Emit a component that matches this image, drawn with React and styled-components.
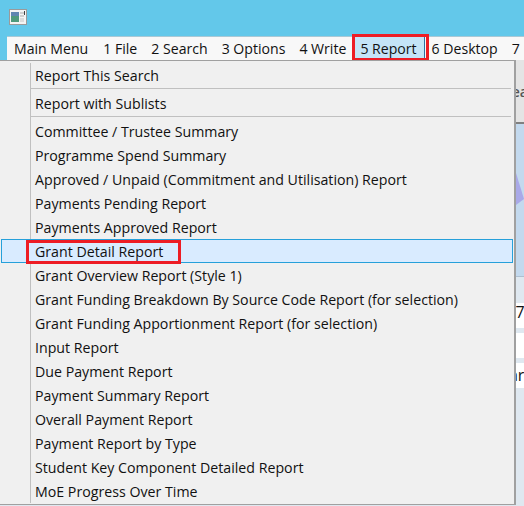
import React from "react";
import styled, { createGlobalStyle } from "styled-components";

const Global = createGlobalStyle`
  html, body { margin: 0; padding: 0; width: 524px; height: 506px; overflow: hidden; background: #63c8ea; }
  body { font-family: "Open Sans", "Noto Sans", "Liberation Sans", sans-serif; color: #111; }
`;
const Page = styled.div`
  position: relative;
  width: 524px;
  height: 506px;
  overflow: hidden;
  display: flex;
  flex-direction: column;
`;
const TitleBar = styled.header`
  height: 36px;
  flex: none;
  display: flex;
  align-items: flex-start;
  padding: 9px 0 0 9px;
  box-sizing: border-box;
  background: #63c8ea;
`;
const MenuBar = styled.nav`
  height: 24px;
  flex: none;
  margin-left: 7px;
  display: flex;
  align-items: center;
  background: #f8f8f8;
  border-top: 1px solid #a9c9d6;
  box-sizing: border-box;
  font-size: 14.1px;
  white-space: nowrap;
  overflow: visible;
`;
const BarItem = styled.span`
  position: relative;
  height: 24px;
  flex: none;
  display: flex;
  align-items: center;
  padding: 0 7px;
  margin-right: ${(p) => p.$gap || 0}px;
  background: ${(p) => (p.$open ? "#c4e4f7" : "transparent")};
  border-right: ${(p) => (p.$open ? "1px solid #2f6f9f" : "none")};
`;
const Workspace = styled.main`
  flex: 1;
  display: flex;
  flex-direction: column;
  background: #dfe8f0;
`;
const TabStrip = styled.div`
  height: 64px;
  flex: none;
  box-sizing: border-box;
  background: #e4e4e4;
  border-bottom: 2px solid #808080;
  padding: 22px 0 0 504px;
  font-size: 14px;
  font-weight: 600;
  color: #555;
  white-space: nowrap;
`;
const ChartArea = styled.div`
  height: 153px;
  flex: none;
  background: #c3d9ee;
  border-bottom: 1px solid #aebfd0;
  display: flex;
  justify-content: flex-end;
  align-items: flex-start;
  padding-top: 49px;
  box-sizing: border-box;
`;
const Table = styled.div`
  display: flex;
  flex-direction: column;
  gap: 5px;
  padding-top: 26px;
`;
const TableRow = styled.div`
  height: 25px;
  background: #fff;
  padding-left: ${(p) => p.$indent}px;
  font-size: 16px;
  line-height: ${(p) => p.$line || 25}px;
  white-space: nowrap;
`;
const Menu = styled.div`
  position: absolute;
  left: -1px;
  top: 60px;
  width: 517px;
  height: 445px;
  box-sizing: border-box;
  background: #f0f0f0;
  border: 1px solid #a0a0a0;
  border-right-width: 2px;
  padding: 2px 1px 1px 1px;
  display: flex;
  flex-direction: column;
  font-size: 14.2px;
  color: #111;
`;
const Gutter = styled.div`
  position: absolute;
  left: 30px;
  top: 2px;
  bottom: 1px;
  width: 1px;
  background: #c0c0c0;
`;
const Row = styled.div`
  position: relative;
  height: 24px;
  flex: none;
  box-sizing: border-box;
  display: flex;
  align-items: center;
  padding-left: 34px;
  white-space: nowrap;
  ${(p) => p.$active && `
    background: #d9ebff;
    border: 1px solid #26a0da;
    padding-left: 33px;
  `}
`;
const Separator = styled.div`
  height: 1px;
  flex: none;
  margin: 1px 2px 2px 30px;
  background: #c0c0c0;
`;
const Callout = styled.span`
  position: absolute;
  box-sizing: border-box;
  border: 3px solid #ed1c24;
  pointer-events: none;
`;
const BarCallout = styled(Callout)`
  left: -1px;
  top: -3px;
  width: 77px;
  height: 27px;
`;
const RowCallout = styled(Callout)`
  left: 24px;
  top: 0;
  width: 155px;
  height: 24px;
`;

const groupItems = [
  "Committee / Trustee Summary",
  "Programme Spend Summary",
  "Approved / Unpaid (Commitment and Utilisation) Report",
  "Payments Pending Report",
  "Payments Approved Report",
  "Grant Detail Report",
  "Grant Overview Report (Style 1)",
  "Grant Funding Breakdown By Source Code Report (for selection)",
  "Grant Funding Apportionment Report (for selection)",
  "Input Report",
  "Due Payment Report",
  "Payment Summary Report",
  "Overall Payment Report",
  "Payment Report by Type",
  "Student Key Component Detailed Report",
  "MoE Progress Over Time",
];

const AppIcon = () => (
  <svg width="18" height="17" viewBox="0 0 18 17">
    <rect x="0.5" y="0.5" width="17" height="15" fill="#f4f4f4" stroke="#9a9a9a" />
    <rect x="2" y="3" width="8" height="10" fill="#4f9a7c" />
    <rect x="2" y="3" width="8" height="4" fill="#5f86b0" />
    <rect x="11" y="3" width="4" height="2" fill="#cfcfcf" />
    <rect x="11" y="6" width="4" height="2" fill="#cfcfcf" />
    <rect x="11" y="9" width="4" height="4" fill="#dcdcdc" />
    <rect x="15" y="2" width="1" height="4" fill="#444" />
  </svg>
);

export default function App() {
  return (
    <Page>
      <Global />
      <TitleBar><AppIcon /></TitleBar>
      <MenuBar>
        <BarItem $gap={1}>Main Menu</BarItem>
        <BarItem>1 File</BarItem>
        <BarItem>2 Search</BarItem>
        <BarItem>3 Options</BarItem>
        <BarItem>4 Write</BarItem>
        <BarItem $open>5 Report<BarCallout /></BarItem>
        <BarItem>6 Desktop</BarItem>
        <BarItem>7 Help</BarItem>
      </MenuBar>
      <Workspace>
        <TabStrip>Search</TabStrip>
        <ChartArea>
          <svg width="8" height="32" viewBox="0 0 8 32">
            <polygon points="0,0 8,26 0,32" fill="#a9a9e8" />
          </svg>
        </ChartArea>
        <Table>
          <TableRow $indent={488} $line={19}>2007</TableRow>
          <TableRow $indent={524} />
          <TableRow $indent={491}>Year</TableRow>
        </Table>
      </Workspace>
      <Menu>
        <Gutter />
        <Row>Report This Search</Row>
        <Separator />
        <Row>Report with Sublists</Row>
        <Separator />
        {groupItems.map((label) => (
          <Row key={label} $active={label === "Grant Detail Report"}>
            {label}
            {label === "Grant Detail Report" && <RowCallout />}
          </Row>
        ))}
      </Menu>
    </Page>
  );
}
